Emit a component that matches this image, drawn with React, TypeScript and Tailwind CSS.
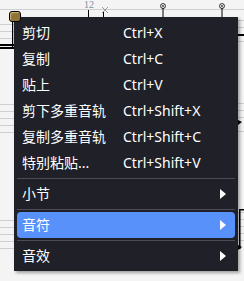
import React from "react";

type Item =
  | { kind: "item"; label: string; shortcut?: string; sub?: boolean; active?: boolean }
  | { kind: "sep" };

const items: Item[] = [
  { kind: "item", label: "剪切", shortcut: "Ctrl+X" },
  { kind: "item", label: "复制", shortcut: "Ctrl+C" },
  { kind: "item", label: "贴上", shortcut: "Ctrl+V" },
  { kind: "item", label: "剪下多重音轨", shortcut: "Ctrl+Shift+X" },
  { kind: "item", label: "复制多重音轨", shortcut: "Ctrl+Shift+C" },
  { kind: "item", label: "特别粘贴...", shortcut: "Ctrl+Shift+V" },
  { kind: "sep" },
  { kind: "item", label: "小节", sub: true },
  { kind: "sep" },
  { kind: "item", label: "音符", sub: true, active: true },
  { kind: "sep" },
  { kind: "item", label: "音效", sub: true },
];

function Arrow() {
  return (
    <svg width="6" height="10" viewBox="0 0 6 10" className="block">
      <path d="M0 0 L6 5 L0 10 Z" fill="#ffffff" />
    </svg>
  );
}

function Score() {
  const gray = "#cfcfcf";
  const leftLines = [24, 31, 38, 104, 111, 118, 125, 132, 220, 227, 234, 241, 248];
  const rightLines = [20, 27, 41, 103, 110, 117, 131, 212, 219, 226, 233, 240];
  return (
    <svg width="244" height="281" className="absolute left-0 top-0">
      <line x1="0" y1="9.5" x2="244" y2="9.5" stroke={gray} strokeWidth="1" />
      {leftLines.map((y) => (
        <line key={"l" + y} x1="0" y1={y + 0.5} x2="14" y2={y + 0.5} stroke={gray} strokeWidth="1" />
      ))}
      {rightLines.map((y) => (
        <line key={"r" + y} x1="238" y1={y + 0.5} x2="244" y2={y + 0.5} stroke={gray} strokeWidth="1" />
      ))}
      <rect x="0" y="44" width="14" height="2" fill="#000" />
      <rect x="0" y="47" width="14" height="2" fill="#000" />
      <rect x="12" y="20" width="1.2" height="29" fill="#000" />
      <rect x="238" y="34" width="6" height="2" fill="#000" />
      <path d="M238 120 L242 122 L238 125 Z" fill="#000" />
      <rect x="239" y="209" width="5" height="1.5" fill="#000" />
      <rect x="239" y="209" width="1.5" height="40" fill="#000" />
      <path d="M238 245 L242 247 L238 250 Z" fill="#000" />
      <text x="84" y="8" fontSize="10" fill="#7f8fa3" fontFamily="'Liberation Serif', serif">12</text>
      <rect x="88" y="10" width="1" height="8" fill="#000" />
      <rect x="103" y="11" width="1" height="7" fill="#000" />
      <path d="M102 7 L108 13 M108 7 L102 13" stroke="#9a9a9a" strokeWidth="1" />
      <circle cx="163" cy="6" r="2.5" fill="none" stroke="#333" strokeWidth="0.9" />
      <path d="M161.3 4.3 L164.7 7.7 M164.7 4.3 L161.3 7.7" stroke="#333" strokeWidth="0.7" />
      <rect x="162.5" y="8" width="1" height="10" fill="#000" />
      <circle cx="222" cy="6" r="2.5" fill="none" stroke="#333" strokeWidth="0.9" />
      <path d="M220.3 4.3 L223.7 7.7 M223.7 4.3 L220.3 7.7" stroke="#333" strokeWidth="0.7" />
      <rect x="221.5" y="8" width="1" height="10" fill="#000" />
    </svg>
  );
}

export default function App() {
  return (
    <div className="relative w-[244px] h-[281px] overflow-hidden bg-[#f4f4f4]">
      <Score />
      <div
        className="absolute left-[14px] top-[17px] w-[224px] h-[254px] bg-[#1f2028] pt-[3px] pb-[2px] shadow-[2px_2px_3px_rgba(0,0,0,0.35)] flex flex-col"
        style={{ fontFamily: "'Noto Sans', 'Noto Sans CJK SC', sans-serif" }}
      >
        {items.map((it, i) =>
          it.kind === "sep" ? (
            <div key={i} className="mx-[3px] my-[2px] h-px bg-[#4b4c56]" />
          ) : (
            <div
              key={i}
              className={
                "mx-[3px] h-[26px] px-[5px] flex items-center text-[14px] text-white leading-none " +
                (it.active ? "bg-[#5891fa] rounded-[4px]" : "")
              }
            >
              <span className="w-[101px] shrink-0 whitespace-nowrap">{it.label}</span>
              {it.shortcut && <span className="whitespace-nowrap">{it.shortcut}</span>}
              {it.sub && (
                <span className="ml-auto mr-[4px]">
                  <Arrow />
                </span>
              )}
            </div>
          )
        )}
      </div>
      <div className="absolute left-[9px] top-[11px] w-[12px] h-[11px] rounded-[3px] border border-black bg-[#8f7337] shadow-[inset_1px_1px_1px_rgba(255,230,160,0.6)]" />
    </div>
  );
}
